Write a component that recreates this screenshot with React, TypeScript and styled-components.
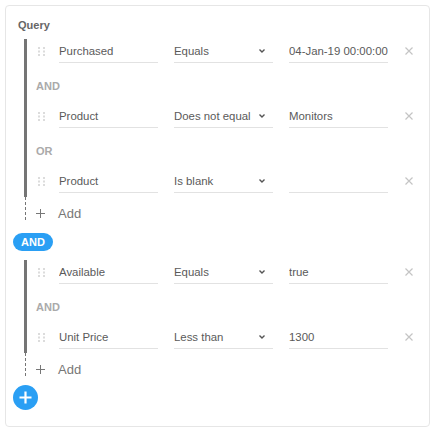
import React from "react";
import styled, { createGlobalStyle } from "styled-components";

const Global = createGlobalStyle`
  html, body { margin: 0; padding: 0; background: #fff; }
  body { font-family: "Liberation Sans", Arial, sans-serif; }
  * { box-sizing: border-box; }
`;

const Card = styled.div`
  margin: 5px 0 0 5px;
  width: 425px;
  height: 422px;
  border: 1px solid #e6e6e6;
  border-radius: 4px;
  padding: 12px 0 0 7px;
  display: flex;
  flex-direction: column;
  align-items: flex-start;
`;

const Title = styled.div`
  margin-left: 5px;
  font-size: 11px;
  font-weight: bold;
  line-height: 14px;
  color: #666;
  margin-bottom: 7px;
`;

const Group = styled.div<{ $gapTop?: number }>`
  margin-left: 11px;
  margin-top: ${(p) => p.$gapTop ?? 0}px;
  border-left: 3px solid #757575;
  padding-bottom: 4px;
  display: flex;
  flex-direction: column;
`;

const Row = styled.div`
  height: 24px;
  display: flex;
  align-items: stretch;
`;

const Handle = styled.div`
  margin-left: 11px;
  width: 7px;
  display: flex;
  align-items: center;
`;

const Field = styled.div<{ $first?: boolean }>`
  margin-left: ${(p) => (p.$first ? 14 : 16)}px;
  width: 99px;
  border-bottom: 1px solid #e2e2e2;
  display: flex;
  align-items: center;
  justify-content: space-between;
  font-size: 11.4px;
  color: #5a5a5a;
  white-space: nowrap;
  overflow: hidden;
`;

const Chevron = styled.span`
  display: flex;
  margin-right: 8px;
  flex: none;
`;

const Remove = styled.div`
  margin-left: 17px;
  width: 8px;
  display: flex;
  align-items: center;
`;

const Conj = styled.div`
  padding: 16px 0 11px 9px;
  font-size: 11px;
  line-height: 14px;
  font-weight: bold;
  color: #aaa;
`;

const AddRow = styled.div`
  position: relative;
  margin-left: 12px;
  height: 32px;
  display: flex;
  align-items: center;
  &::before {
    content: "";
    position: absolute;
    left: 0;
    top: 0;
    width: 1px;
    height: 24px;
    background: repeating-linear-gradient(
      to bottom,
      #757575 0 3px,
      transparent 3px 5px
    );
  }
`;

const AddIcon = styled.span`
  margin-left: 11px;
  width: 9px;
  display: flex;
`;

const AddText = styled.span`
  margin-left: 13px;
  font-size: 13px;
  color: #777;
`;

const Pill = styled.div`
  margin-top: 4px;
  width: 40px;
  height: 18px;
  border-radius: 9px;
  background: #2a9ff4;
  color: #fff;
  font-size: 11px;
  font-weight: bold;
  display: flex;
  align-items: center;
  justify-content: center;
`;

const PlusButton = styled.div`
  width: 25px;
  height: 25px;
  border-radius: 50%;
  background: #2a9ff4;
  display: flex;
  align-items: center;
  justify-content: center;
`;

const DragDots = () => (
  <svg width="7" height="9" viewBox="0 0 7 9">
    {[0, 3.5, 7].map((y) =>
      [0, 5].map((x) => (
        <rect key={`${x}-${y}`} x={x} y={y} width="2" height="2" fill="#dcdcdc" />
      ))
    )}
  </svg>
);

const ChevronIcon = () => (
  <svg width="6" height="4" viewBox="0 0 6 4">
    <polyline points="0.5,0.5 3,3 5.5,0.5" fill="none" stroke="#555" strokeWidth="1.4" />
  </svg>
);

const XIcon = () => (
  <svg width="8" height="8" viewBox="0 0 8 8">
    <path d="M0.5 0.5 L7.5 7.5 M7.5 0.5 L0.5 7.5" stroke="#c4c4c4" strokeWidth="1.2" />
  </svg>
);

const ThinPlus = () => (
  <svg width="9" height="9" viewBox="0 0 9 9">
    <path d="M4.5 0 V9 M0 4.5 H9" stroke="#777" strokeWidth="1" />
  </svg>
);

const BoldPlus = () => (
  <svg width="13" height="13" viewBox="0 0 13 13">
    <path d="M6.5 0.5 V12.5 M0.5 6.5 H12.5" stroke="#fff" strokeWidth="2.2" />
  </svg>
);

type Cond = { field: string; op: string; value: string };

const Condition = ({ c }: { c: Cond }) => (
  <Row>
    <Handle>
      <DragDots />
    </Handle>
    <Field $first>{c.field}</Field>
    <Field>
      <span>{c.op}</span>
      <Chevron>
        <ChevronIcon />
      </Chevron>
    </Field>
    <Field>{c.value}</Field>
    <Remove>
      <XIcon />
    </Remove>
  </Row>
);

const AddLine = () => (
  <AddRow>
    <AddIcon>
      <ThinPlus />
    </AddIcon>
    <AddText>Add</AddText>
  </AddRow>
);

type Item = { conj?: string; c: Cond };

const group1: Item[] = [
  { c: { field: "Purchased", op: "Equals", value: "04-Jan-19 00:00:00" } },
  { conj: "AND", c: { field: "Product", op: "Does not equal", value: "Monitors" } },
  { conj: "OR", c: { field: "Product", op: "Is blank", value: "" } },
];

const group2: Item[] = [
  { c: { field: "Available", op: "Equals", value: "true" } },
  { conj: "AND", c: { field: "Unit Price", op: "Less than", value: "1300" } },
];

const GroupBlock = ({ items, gapTop }: { items: Item[]; gapTop?: number }) => (
  <Group $gapTop={gapTop}>
    {items.map((it, i) => (
      <React.Fragment key={i}>
        {it.conj && <Conj>{it.conj}</Conj>}
        <Condition c={it.c} />
      </React.Fragment>
    ))}
  </Group>
);

export default function App() {
  return (
    <>
      <Global />
      <Card>
        <Title>Query</Title>
        <GroupBlock items={group1} />
        <AddLine />
        <Pill>AND</Pill>
        <GroupBlock items={group2} gapTop={9} />
        <AddLine />
        <PlusButton>
          <BoldPlus />
        </PlusButton>
      </Card>
    </>
  );
}
